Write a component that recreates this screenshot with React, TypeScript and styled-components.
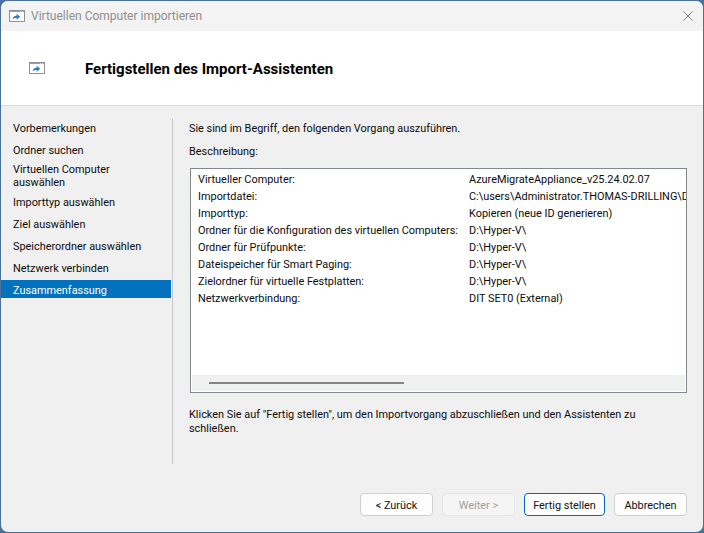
import React from 'react';
import styled, { createGlobalStyle } from 'styled-components';

const steps = [
  'Vorbemerkungen',
  'Ordner suchen',
  'Virtuellen Computer auswählen',
  'Importtyp auswählen',
  'Ziel auswählen',
  'Speicherordner auswählen',
  'Netzwerk verbinden',
  'Zusammenfassung',
];

const summary = [
  ['Virtueller Computer:', 'AzureMigrateAppliance_v25.24.02.07'],
  ['Importdatei:', 'C:\\users\\Administrator.THOMAS-DRILLING\\D'],
  ['Importtyp:', 'Kopieren (neue ID generieren)'],
  ['Ordner für die Konfiguration des virtuellen Computers:', 'D:\\Hyper-V\\'],
  ['Ordner für Prüfpunkte:', 'D:\\Hyper-V\\'],
  ['Dateispeicher für Smart Paging:', 'D:\\Hyper-V\\'],
  ['Zielordner für virtuelle Festplatten:', 'D:\\Hyper-V\\'],
  ['Netzwerkverbindung:', 'DIT SET0 (External)'],
];

const WindowIcon = () => (
  <svg width="16" height="12" viewBox="0 0 16 12">
    <rect x="0.5" y="0.5" width="15" height="11" fill="#fff" stroke="#8c9197" />
    <rect x="1" y="1" width="14" height="1" fill="#9a9ea3" />
    <rect x="11" y="1" width="1" height="1" fill="#e0e0e0" />
    <rect x="13" y="1" width="1" height="1" fill="#e0e0e0" />
    <path d="M3.6 9.6c.2-2.4 1.6-3.8 4-3.9V3.8l3.7 3-3.7 3V8c-1.6 0-2.9.4-4 1.6z" fill="#2f7cc9" />
  </svg>
);

const App: React.FC = () => (
  <>
    <GlobalStyle />
    <Frame>
      <Dialog>
        <TitleBar>
          <WindowIcon />
          <TitleText>Virtuellen Computer importieren</TitleText>
          <CloseIcon width="10" height="10" viewBox="0 0 10 10">
            <path d="M.3.3l9.4 9.4M9.7.3L.3 9.7" stroke="#8a8a8a" strokeWidth="1" fill="none" />
          </CloseIcon>
        </TitleBar>

        <Header>
          <WindowIcon />
          <Heading>Fertigstellen des Import-Assistenten</Heading>
        </Header>

        <Main>
          <Sidebar>
            {steps.map((step, i) => (
              <Step key={step} $active={i === steps.length - 1} $tall={step.length > 25}>
                {step}
              </Step>
            ))}
          </Sidebar>

          <Content>
            <Intro>Sie sind im Begriff, den folgenden Vorgang auszuführen.</Intro>
            <BoxLabel>Beschreibung:</BoxLabel>
            <SummaryBox>
              <SummaryList>
                {summary.map(([label, value]) => (
                  <SummaryRow key={label}>
                    <span>{label}</span>
                    <Value>{value}</Value>
                  </SummaryRow>
                ))}
              </SummaryList>
              <ScrollTrack>
                <ScrollThumb />
              </ScrollTrack>
            </SummaryBox>
            <Outro>
              Klicken Sie auf "Fertig stellen", um den Importvorgang abzuschließen und den Assistenten zu
              schließen.
            </Outro>
          </Content>
        </Main>

        <Footer>
          <Button>&lt; Zurück</Button>
          <Button disabled>Weiter &gt;</Button>
          <Button $wide $primary>Fertig stellen</Button>
          <Button>Abbrechen</Button>
        </Footer>
      </Dialog>
    </Frame>
  </>
);

const GlobalStyle = createGlobalStyle`
  html, body {
    margin: 0;
    padding: 0;
    background: #4a7298;
  }
  body {
    font-family: Roboto, "Noto Sans", sans-serif;
    font-size: 10.9px;
    color: #0c0c0c;
  }
`;

const Frame = styled.div`
  width: 704px;
  height: 533px;
  padding: 1px;
  box-sizing: border-box;
  background: #4a7298;
`;

const Dialog = styled.div`
  height: 100%;
  display: flex;
  flex-direction: column;
  background: #f0f0f0;
  border-radius: 7px;
  overflow: hidden;
`;

const TitleBar = styled.div`
  height: 30px;
  flex: none;
  display: flex;
  align-items: center;
  gap: 6px;
  padding: 0 10px 0 8px;
  background: #f3f3f3;
`;

const TitleText = styled.span`
  flex: 1;
  font-size: 12px;
  color: #8e8e8e;
`;

const CloseIcon = styled.svg`
  flex: none;
  margin-top: -1px;
`;

const Header = styled.div`
  height: 75px;
  flex: none;
  display: flex;
  align-items: center;
  box-sizing: border-box;
  padding: 0 0 0 28px;
  background: #fff;
  border-bottom: 1px solid #dcdcdc;
`;

const Heading = styled.h1`
  margin: 2px 0 0 40px;
  font-size: 15px;
  font-weight: 700;
  color: #000;
`;

const Main = styled.div`
  flex: 1;
  display: flex;
  min-height: 0;
  padding-top: 12px;
`;

const Sidebar = styled.div`
  width: 170px;
  height: 346px;
  flex: none;
  border-right: 1px solid #c9c9c9;
  padding-right: 1px;
`;

const Step = styled.div<{ $active?: boolean; $tall?: boolean }>`
  height: ${props => (props.$active ? '18px' : props.$tall ? '30px' : '22px')};
  padding: ${props => (props.$active ? '2px 12px 0' : '0 12px 2px')};
  display: flex;
  align-items: center;
  box-sizing: border-box;
  line-height: 13px;
  background: ${props => (props.$active ? '#0072be' : 'transparent')};
  color: ${props => (props.$active ? '#fff' : 'inherit')};
`;

const Content = styled.div`
  flex: 1;
  min-width: 0;
  padding: 3px 16px 0 16px;
  display: flex;
  flex-direction: column;
`;

const Intro = styled.p`
  margin: 0;
  line-height: 16px;
`;

const BoxLabel = styled.p`
  margin: 7px 0 0;
  line-height: 16px;
`;

const SummaryBox = styled.div`
  margin: 8px 0 0 1px;
  height: 225px;
  flex: none;
  box-sizing: border-box;
  border: 1px solid #828790;
  display: flex;
  flex-direction: column;
  background: #fff;
  overflow: hidden;
`;

const SummaryList = styled.div`
  flex: 1;
  padding: 2px 0 0 7px;
  overflow: hidden;
`;

const SummaryRow = styled.div`
  height: 17px;
  display: grid;
  grid-template-columns: 271px 1fr;
  align-items: center;
  white-space: nowrap;
`;

const Value = styled.span`
  overflow: hidden;
`;

const ScrollTrack = styled.div`
  height: 16px;
  margin: 0 1px 1px;
  flex: none;
  display: flex;
  align-items: center;
  padding-left: 17px;
  background: #f0f0f0;
`;

const ScrollThumb = styled.div`
  width: 195px;
  height: 2px;
  background: #858585;
`;

const Outro = styled.p`
  margin: 15px 0 0;
  line-height: 14px;
  width: 455px;
`;

const Footer = styled.div`
  height: 39px;
  flex: none;
  display: flex;
  justify-content: flex-end;
  gap: 9px;
  padding: 0 16px 0 0;
`;

const Button = styled.button<{ $wide?: boolean; $primary?: boolean }>`
  width: ${props => (props.$wide ? '81px' : '73px')};
  height: 23px;
  padding: 2px 0 0;
  font: inherit;
  color: #111;
  background: #fdfdfd;
  border: 1px solid ${props => (props.$primary ? '#0067c0' : '#d0d0d0')};
  border-radius: 4px;

  &:disabled {
    color: #a0a0a0;
    background: #f5f5f5;
    border-color: #e6e6e6;
  }
`;

export default App;
